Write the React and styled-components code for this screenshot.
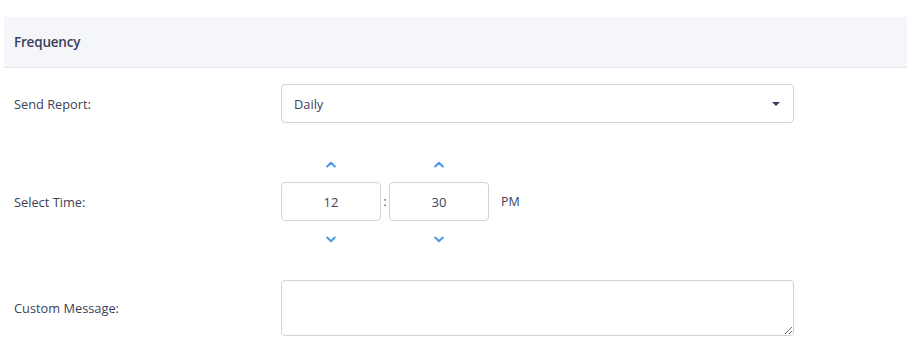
import React from "react";
import styled, { createGlobalStyle } from "styled-components";

const Global = createGlobalStyle`
  html, body { margin: 0; padding: 0; background: #fff; }
  body { font-family: "Open Sans", "Noto Sans", sans-serif; color: #3b3f5c; }
  * { box-sizing: border-box; }
`;

const Page = styled.div`
  padding: 17px 0 0 4px;
`;

const SectionHeader = styled.div`
  height: 51px;
  background: #f5f6fa;
  border-bottom: 1px solid #e3e6ec;
  display: flex;
  align-items: center;
  padding-left: 10px;
  font-size: 13.5px;
  font-weight: 600;
  letter-spacing: -0.2px;
  color: #3b3f5c;
`;

const Form = styled.div`
  display: flex;
  flex-direction: column;
  gap: 30px;
  padding: 16px 0 0 10px;
`;

const Row = styled.div`
  display: grid;
  grid-template-columns: 267px 513px;
  align-items: center;
`;

const Label = styled.label`
  font-size: 12.8px;
  font-weight: 500;
  color: #3b3f5c;
`;

const SelectBox = styled.div`
  height: 39px;
  border: 1px solid #ced4da;
  border-radius: 4px;
  display: flex;
  align-items: center;
  justify-content: space-between;
  padding: 0 13px 0 12px;
  font-size: 12.8px;
  font-weight: 500;
  color: #3b3f5c;
`;

const Caret = styled.span`
  width: 0;
  height: 0;
  border-left: 4px solid transparent;
  border-right: 4px solid transparent;
  border-top: 4px solid #3b3f5c;
`;

const TimeWrap = styled.div`
  display: flex;
  align-items: center;
`;

const Spinner = styled.div`
  display: flex;
  flex-direction: column;
  align-items: center;
  gap: 7px;
`;

const ChevronBtn = styled.button`
  height: 22px;
  width: 30px;
  border: none;
  background: transparent;
  padding: 0;
  display: flex;
  align-items: center;
  justify-content: center;
  cursor: pointer;
`;

const TimeInput = styled.div`
  width: 100px;
  height: 39px;
  border: 1px solid #ced4da;
  border-radius: 4px;
  display: flex;
  align-items: center;
  justify-content: center;
  font-size: 13px;
  color: #3b3f5c;
`;

const Colon = styled.span`
  width: 8px;
  text-align: center;
  font-size: 12px;
  color: #3b3f5c;
`;

const Meridian = styled.span`
  margin-left: 12px;
  font-size: 12.5px;
  font-weight: 500;
  color: #3b3f5c;
`;

const TextArea = styled.textarea`
  height: 56px;
  width: 513px;
  border: 1px solid #ced4da;
  border-radius: 4px;
  resize: both;
  font-family: inherit;
  outline: none;
`;

const Chevron = ({ up }) => (
  <svg width="10" height="7" viewBox="0 0 10 7">
    <path
      d={up ? "M1.2 5.5 L5 1.7 L8.8 5.5" : "M1.2 1.5 L5 5.3 L8.8 1.5"}
      fill="none"
      stroke="#4f97ea"
      strokeWidth="2"
      strokeLinecap="round"
      strokeLinejoin="round"
    />
  </svg>
);

const TimeSpinner = ({ value }) => (
  <Spinner>
    <ChevronBtn aria-label="up"><Chevron up /></ChevronBtn>
    <TimeInput>{value}</TimeInput>
    <ChevronBtn aria-label="down"><Chevron /></ChevronBtn>
  </Spinner>
);

export default function App() {
  return (
    <Page>
      <Global />
      <SectionHeader>Frequency</SectionHeader>
      <Form>
        <Row>
          <Label>Send Report:</Label>
          <SelectBox>
            <span>Daily</span>
            <Caret />
          </SelectBox>
        </Row>
        <Row>
          <Label>Select Time:</Label>
          <TimeWrap>
            <TimeSpinner value="12" />
            <Colon>:</Colon>
            <TimeSpinner value="30" />
            <Meridian>PM</Meridian>
          </TimeWrap>
        </Row>
        <Row>
          <Label>Custom Message:</Label>
          <TextArea />
        </Row>
      </Form>
    </Page>
  );
}
